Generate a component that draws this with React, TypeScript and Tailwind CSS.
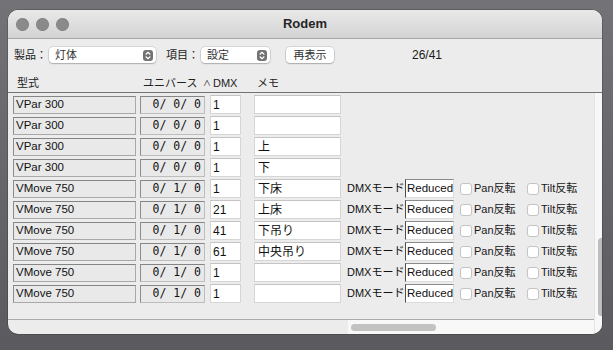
import React from 'react';

type Row = {
  model: string;
  universe: string;
  dmx: string;
  memo: string;
  moving: boolean;
};

const rows: Row[] = [
  { model: 'VPar 300', universe: '0/ 0/ 0', dmx: '1', memo: '', moving: false },
  { model: 'VPar 300', universe: '0/ 0/ 0', dmx: '1', memo: '', moving: false },
  { model: 'VPar 300', universe: '0/ 0/ 0', dmx: '1', memo: '上', moving: false },
  { model: 'VPar 300', universe: '0/ 0/ 0', dmx: '1', memo: '下', moving: false },
  { model: 'VMove 750', universe: '0/ 1/ 0', dmx: '1', memo: '下床', moving: true },
  { model: 'VMove 750', universe: '0/ 1/ 0', dmx: '21', memo: '上床', moving: true },
  { model: 'VMove 750', universe: '0/ 1/ 0', dmx: '41', memo: '下吊り', moving: true },
  { model: 'VMove 750', universe: '0/ 1/ 0', dmx: '61', memo: '中央吊り', moving: true },
  { model: 'VMove 750', universe: '0/ 1/ 0', dmx: '1', memo: '', moving: true },
  { model: 'VMove 750', universe: '0/ 1/ 0', dmx: '1', memo: '', moving: true },
];

function SelectArrow() {
  return (
    <span className="flex h-[11px] w-[10px] items-center justify-center rounded-[3px] bg-[#727272]">
      <svg width="6" height="9" viewBox="0 0 6 9" fill="none" stroke="white" strokeWidth="1.2" strokeLinecap="round" strokeLinejoin="round">
        <path d="M1 3.2 L3 1.3 L5 3.2" />
        <path d="M1 5.8 L3 7.7 L5 5.8" />
      </svg>
    </span>
  );
}

function Popup({ label, width }: { label: string; width: string }) {
  return (
    <div className={`flex h-[16px] ${width} items-center justify-between rounded-[4px] bg-white pl-[6px] pr-[3px] shadow-[0_0_0_0.5px_rgba(0,0,0,0.18),0_1px_1.5px_rgba(0,0,0,0.2)]`}>
      <span className="text-[11px] leading-none text-[#333]">{label}</span>
      <SelectArrow />
    </div>
  );
}

function Check({ label }: { label: string }) {
  return (
    <div className="flex w-[67px] items-center gap-[2px]">
      <span className="h-[12px] w-[12px] rounded-[3px] border border-[#c4c4c4] bg-white" />
      <span className="text-[11px] leading-none text-[#1a1a1a]">{label}</span>
    </div>
  );
}

export default function App() {
  return (
    <div
      className="h-[350px] w-[613px] bg-gradient-to-b from-[#737377] to-[#5b5b5f] pl-[8px] pr-[11px] pt-[10px]"
      style={{ fontFamily: "'Liberation Sans', 'Noto Sans CJK JP', sans-serif" }}
    >
      <div className="flex h-[324px] w-[594px] flex-col overflow-hidden rounded-[10px] bg-[#ececec] shadow-[0_0_0_0.5px_rgba(0,0,0,0.35)]">
        {/* title bar */}
        <div className="grid h-[29px] grid-cols-[1fr_auto_1fr] items-center border-b border-[#a6a6a6] bg-gradient-to-b from-[#e9e9e9] to-[#d3d3d3]">
          <div className="flex gap-[7px] pl-[8px]">
            <span className="h-[13px] w-[13px] rounded-full bg-[#8a8a8a] shadow-[inset_0_0_0_0.5px_rgba(0,0,0,0.15)]" />
            <span className="h-[13px] w-[13px] rounded-full bg-[#8a8a8a] shadow-[inset_0_0_0_0.5px_rgba(0,0,0,0.15)]" />
            <span className="h-[13px] w-[13px] rounded-full bg-[#8a8a8a] shadow-[inset_0_0_0_0.5px_rgba(0,0,0,0.15)]" />
          </div>
          <span className="text-[13px] font-bold text-[#262626]">Rodem</span>
          <div />
        </div>

        {/* toolbar + column headers */}
        <div className="flex h-[54px] flex-col border-b border-[#737373] pt-[8px]">
          <div className="flex h-[16px] items-center">
            <span className="ml-[6px] w-[35px] text-[11px] text-[#222]">製品：</span>
            <Popup label="灯体" width="w-[107px]" />
            <span className="ml-[10px] w-[35px] text-[11px] text-[#222]">項目：</span>
            <Popup label="設定" width="w-[69px]" />
            <div className="ml-[16px] flex h-[16px] w-[48px] items-center justify-center rounded-[4px] bg-white text-[11px] text-[#333] shadow-[0_0_0_0.5px_rgba(0,0,0,0.2),0_1px_1.5px_rgba(0,0,0,0.2)]">
              再表示
            </div>
            <span className="ml-[78px] text-[12px] text-[#1a1a1a]">26/41</span>
          </div>
          <div className="mt-[15px] flex items-center text-[11px] leading-none text-[#222]">
            <span className="ml-[9px] w-[126px]">型式</span>
            <span className="w-[60px]">ユニバース</span>
            <span className="w-[10px] text-[8px]">∧</span>
            <span className="w-[44px]">DMX</span>
            <span>メモ</span>
          </div>
        </div>

        {/* table area */}
        <div className="flex flex-1">
          <div className="flex flex-1 flex-col">
            <div className="flex flex-1 flex-col pt-[1px]">
              {rows.map((r, i) => (
                <div key={i} className="flex h-[21px] items-center pl-[5px] text-[11.5px] text-[#111]">
                  <div className="flex h-[18px] w-[123px] items-center border border-[#a8a8a8] border-l-[#8c8c8c] border-t-[#858585] bg-[#e9e9e9] pl-[2px]">
                    {r.model}
                  </div>
                  <div
                    className="ml-[4px] flex h-[18px] w-[65px] items-center justify-end border border-[#bdbdbd] border-l-[#8c8c8c] border-t-[#858585] bg-[#e9e9e9] pr-[3px] text-[11.5px]"
                    style={{ fontFamily: "'DejaVu Sans Mono', monospace" }}
                  >
                    {r.universe}
                  </div>
                  <div className="ml-[5px] flex h-[19px] w-[31px] items-center border border-[#d6d6d6] border-t-[#c4c4c4] bg-white pl-[2px] text-[12px]">
                    {r.dmx}
                  </div>
                  <div className="ml-[13px] flex h-[19px] w-[87px] items-center border border-[#d6d6d6] border-t-[#c4c4c4] bg-white pl-[3px] text-[12px]">
                    {r.memo}
                  </div>
                  {r.moving && (
                    <>
                      <span className="ml-[6px] w-[58px] whitespace-nowrap text-[11px]">DMXモード</span>
                      <div className="flex h-[19px] w-[49px] items-center border border-[#dcdcdc] border-l-[#4d4d4d] border-t-[#8a8a8a] bg-white pl-[1px] text-[11.5px]">
                        Reduced
                      </div>
                      <div className="ml-[6px]">
                        <Check label="Pan反転" />
                      </div>
                      <Check label="Tilt反転" />
                    </>
                  )}
                </div>
              ))}
            </div>
            {/* horizontal scroller */}
            <div className="flex h-[15px] border-t border-[#ababab]">
              <div className="w-[340px]" />
              <div className="flex flex-1 items-center bg-[#f8f8f8] pl-[3px]">
                <div className="h-[7px] w-[85px] rounded-full bg-[#c2c2c2]" />
              </div>
            </div>
          </div>
          {/* vertical scroller */}
          <div className="flex w-[13px] shrink-0 flex-col border-l border-[#e4e4e4] bg-[#f7f7f7] pb-[18px] pl-[3px] pt-[145px]">
            <div className="w-[7px] flex-1 rounded-full bg-[#bdbdbd]" />
          </div>
        </div>
      </div>
    </div>
  );
}
